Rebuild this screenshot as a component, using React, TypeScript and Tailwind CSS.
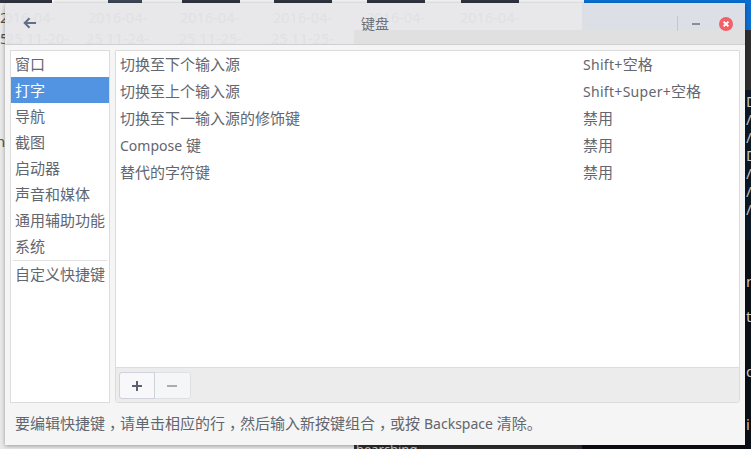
import React from "react";

const font = { fontFamily: '"Noto Sans", "Noto Sans CJK SC", sans-serif' };

const side = ["窗口", "打字", "导航", "截图", "启动器", "声音和媒体", "通用辅助功能", "系统"];
const latinShift = "text-[14px] tracking-[0.3px]";
const rows: [string, React.ReactNode][] = [
  ["切换至下个输入源", <><span className={latinShift}>Shift+</span>空格</>],
  ["切换至上个输入源", <><span className={latinShift}>Shift+Super+</span>空格</>],
  ["切换至下一输入源的修饰键", "禁用"],
  ["Compose", "禁用"],
  ["替代的字符键", "禁用"],
];
const ghostTop = [-9, 83, 175, 268, 361, 455];
const ghostBottom: [number, string][] = [
  [1, "25 11-20-"],
  [81, "25 11-24-"],
  [174, "25 11-25-"],
  [266, "25 11-25-"],
];
const termRows: [number, string][] = [
  [92, "D"], [110, "/"], [128, "/"], [146, "D"], [164, "/"], [182, "/"], [200, "/"],
  [272, "n"], [307, "t"], [362, "d"], [415, "i"],
];
const comma = "relative left-[4px]";

export default function App() {
  return (
    <div className="relative w-[751px] h-[449px] overflow-hidden bg-[#e9e9e9] text-[15px] text-[#62666f]" style={font}>
      {/* desktop behind the window */}
      <div className="absolute left-[354px] top-[30px] w-[397px] h-[419px] bg-[#2e2e2e]" />
      <div className="absolute left-[582px] top-[90px] w-[169px] h-[359px] bg-[#0b0f16]" />
      <div className="absolute left-[745px] top-[90px] w-[6px] h-[150px] bg-[#0d1826]" />
      <div className="absolute left-0 top-0 w-[751px] h-[3px] flex bg-white">
        <div className="w-[52px] bg-[#2f3440]" />
        <div className="w-[54px] ml-[2px] bg-[#f2f2f2]" />
        <div className="w-[34px] bg-[#3d4756]" />
        <div className="w-[40px] bg-[#f2f2f2]" />
        <div className="w-[58px] bg-[#2f3440]" />
        <div className="w-[34px] bg-[#f2f2f2]" />
        <div className="w-[58px] bg-[#2f3440]" />
        <div className="w-[35px] bg-[#f2f2f2]" />
        <div className="w-[58px] bg-[#2f3440]" />
        <div className="w-[36px] bg-[#f2f2f2]" />
        <div className="w-[58px] bg-[#2f3440]" />
        <div className="w-[65px] bg-[#f2f2f2]" />
        <div className="flex-1 bg-[#0a6fd1]" />
      </div>
      <div className="absolute left-[745px] top-0 w-[6px] h-[30px] bg-[#0a6fd1]" />
      <span className="absolute left-0 top-[6px] text-[15px] leading-[22px] text-[#555]">2</span>
      <span className="absolute left-0 top-[27px] text-[15px] leading-[22px] text-[#555]">5</span>
      <span className="absolute left-[-4px] top-[130px] text-[15px] leading-[22px] text-[#555]">n</span>
      {termRows.map(([y, t], i) => (
        <span key={i} className="absolute left-[746px] text-[15px] leading-[18px] text-[#c8c8c8]" style={{ top: y }}>{t}</span>
      ))}
      <span className="absolute left-[356px] top-[442px] text-[13px] leading-[14px] text-[#d0d0d0]">bearching</span>

      {/* window */}
      <div className="absolute left-[5px] top-[3px] w-[740px] h-[442px] flex flex-col bg-[#f5f5f5] rounded-t-[4px] overflow-hidden shadow-[0_1px_4px_rgba(0,0,0,0.35)]">
        <div className="relative h-[42px] shrink-0 bg-[#e8e8ea] border-b border-[#cfcfd1]">
          <div className="absolute left-[349px] top-[27px] right-0 h-[14px] bg-[#e0e0e1]" />
          <div className="absolute left-[577px] top-0 right-0 h-[27px] bg-[#dcdfe5]" />
          {ghostTop.map((x, i) => (
            <span key={i} className="absolute top-[4px] text-[14.5px] leading-[20px] text-[#e1e1e3]" style={{ left: x }}>2016-04-</span>
          ))}
          {ghostBottom.map(([x, t], i) => (
            <span key={i} className="absolute top-[25px] text-[14.5px] leading-[20px] text-[#e1e1e3]" style={{ left: x }}>{t}</span>
          ))}
          <div className="relative h-full flex items-center">
            <svg width="14" height="12" viewBox="0 0 14 12" className="ml-[18px] mb-[1px]" fill="none" stroke="#5f6f85" strokeWidth="2">
              <path d="M13 6H2M6.500 1.200 1.700 6l4.800 4.800" />
            </svg>
            <div className="absolute left-0 right-[0px] top-[11px] text-center leading-[20px] text-[14px] text-[#6a6f7a]">键盘</div>
            <div className="ml-auto w-px h-[15px] mb-[1px] bg-[#c4c7cc]" />
            <div className="ml-[14px] w-[8px] h-[2px] bg-[#8b8f96]" />
            <svg width="14" height="14" viewBox="0 0 14 14" className="ml-[19px] mr-[12px]">
              <circle cx="7" cy="7" r="7" fill="#f46067" />
              <path d="M4.600 4.600l4.800 4.800M9.400 4.600l-4.800 4.800" stroke="#fff" strokeWidth="2" />
            </svg>
          </div>
        </div>

        <div className="flex gap-[5px] px-[5px] pt-[5px] h-[358px] shrink-0">
          <div className="w-[100px] h-[353px] bg-white border border-[#dcdcdc] px-[2px] leading-[26px] shrink-0">
            {side.map((s, i) => (
              <div key={s} className={i === 1 ? "h-[26px] -mx-[2px] px-[4px] bg-[#5294e2] text-white whitespace-nowrap" : "h-[26px] -mx-[2px] px-[4px] whitespace-nowrap"}>{s}</div>
            ))}
            <div className="h-px mt-[1px] bg-[#e2e2e2]" />
            <div className="h-[26px] -mx-[2px] px-[4px] whitespace-nowrap">自定义快捷键</div>
          </div>
          <div className="w-[625px] h-[353px] flex flex-col border border-[#dcdcdc] rounded-b-[3px] overflow-hidden">
            <div className="flex-1 bg-white pl-[4px]">
              {rows.map(([a, b]) => (
                <div key={a} className="flex h-[27px] leading-[26px]">
                  <div className="w-[463px]">{a === "Compose" ? <><span className="text-[14px]">Compose</span> 键</> : a}</div>
                  <div>{b}</div>
                </div>
              ))}
            </div>
            <div className="h-[35px] bg-[#ececec] border-t border-[#dcdcdc] pl-[3px] pt-[4px]">
              <div className="flex w-[72px] h-[27px] rounded-[3px] border border-[#dfe0e6] bg-[#f5f6f7]">
                <div className="w-[36px] border border-[#cfd2dc] -m-px rounded-l-[3px] bg-[#f8f8fa] flex items-center justify-center">
                  <svg width="12" height="12" viewBox="0 0 12 12"><path d="M6 1v10M1 6h10" stroke="#5c616c" strokeWidth="2" /></svg>
                </div>
                <div className="flex-1 flex items-center justify-center">
                  <svg width="12" height="12" viewBox="0 0 12 12"><path d="M1 6h10" stroke="#a9acb3" strokeWidth="2" /></svg>
                </div>
              </div>
            </div>
          </div>
        </div>

        <div className="pl-[10px] pt-[8px] leading-[24px] whitespace-nowrap">
          要编辑快捷键<span className={comma}>，</span>请单击相应的行<span className={comma}>，</span>然后输入新按键组合<span className={comma}>，</span>或按 <span className="text-[14px]">Backspace</span> 清除。
        </div>
      </div>
    </div>
  );
}
